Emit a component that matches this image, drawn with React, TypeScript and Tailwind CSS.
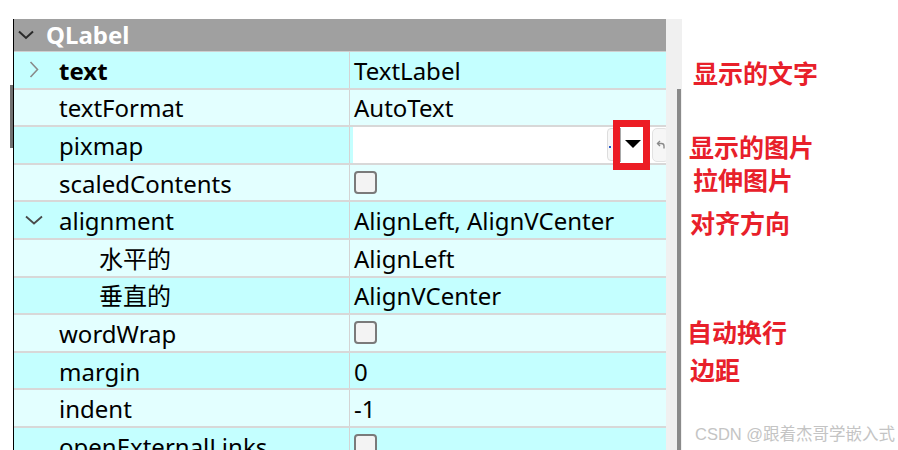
import React from 'react';

type Row = {
  name: string;
  value?: string;
  kind?: 'text' | 'check' | 'pixmap';
  bold?: boolean;
  child?: boolean;
  chevron?: 'right' | 'down';
};

const rows: Row[] = [
  { name: 'text', value: 'TextLabel', bold: true, chevron: 'right' },
  { name: 'textFormat', value: 'AutoText' },
  { name: 'pixmap', kind: 'pixmap' },
  { name: 'scaledContents', kind: 'check' },
  { name: 'alignment', value: 'AlignLeft, AlignVCenter', chevron: 'down' },
  { name: '水平的', value: 'AlignLeft', child: true },
  { name: '垂直的', value: 'AlignVCenter', child: true },
  { name: 'wordWrap', kind: 'check' },
  { name: 'margin', value: '0' },
  { name: 'indent', value: '-1' },
  { name: 'openExternalLinks', kind: 'check' },
];

const notes = [
  { text: '显示的文字', cls: 'mt-[60px] ml-[11px]' },
  { text: '显示的图片', cls: 'mt-[49px] ml-[7px]' },
  { text: '拉伸图片', cls: 'mt-[8px] ml-[11px]' },
  { text: '对齐方向', cls: 'mt-[18px] ml-[8px]' },
  { text: '自动换行', cls: 'mt-[84px] ml-[5px]' },
  { text: '边距', cls: 'mt-[13px] ml-[8px]' },
];

function Checkbox() {
  return <div className="w-[23px] h-[23px] rounded-[4px] border-2 border-[#7a7a7a] bg-[#f3f3f3]" />;
}

function PixmapEditor() {
  return (
    <div className="relative flex-1 h-full flex items-center bg-white ml-[3px] -mr-[3px]">
      <div className="flex-1" />
      <div className="relative w-[12px] h-[33px] border border-[#dddddd] rounded-l-[4px] bg-[#f7f7f7]">
        <div className="absolute left-[1px] bottom-[12px] w-[2px] h-[2px] bg-[#2456c8]" />
      </div>
      <div className="w-[25px] h-[34px] flex items-center justify-center border-l-2 border-[#a8a8a8] bg-white">
        <svg width="16" height="9" viewBox="0 0 16 9">
          <polygon points="0,0 16,0 8,8" fill="#000" />
        </svg>
      </div>
      <div className="w-[8px]" />
      <div className="w-[17px] h-[34px] flex items-center justify-center rounded-[5px] border border-[#e2e2e2] bg-[#f6f6f6]">
        <svg width="9" height="9" viewBox="0 0 9 9" fill="none" stroke="#8a8a8a" strokeWidth="1.4">
          <path d="M4 1 L1.5 3.5 L4 6" />
          <path d="M1.5 3.5 H5.5 Q8 3.5 8 6 V8.5" />
        </svg>
      </div>
      <div className="absolute left-[260px] -top-[7px] w-[37px] h-[50px] border-[7px] border-[#ec1c24]" />
    </div>
  );
}

export default function App() {
  return (
    <div
      className="w-[898px] h-[450px] bg-white flex overflow-hidden"
      style={{ fontFamily: '"Noto Sans", "Noto Sans CJK SC", sans-serif' }}
    >
      <div className="w-[13px] shrink-0">
        <div className="ml-[10px] mt-[85px] w-[3px] h-[63px] bg-[#707070]" />
      </div>

      <div className="mt-[19px] w-[653px] h-[431px] shrink-0 border-l border-black overflow-hidden">
        <div className="h-[33px] bg-[#a0a0a0] flex items-center pl-[4px] border-b border-[#cfcfcf]">
          <svg width="16" height="10" viewBox="0 0 16 10" fill="none" stroke="#2a2a2a" strokeWidth="2">
            <path d="M1 1.5 L8 8 L15 1.5" />
          </svg>
          <span className="ml-[12px] text-white font-bold text-[24px] leading-none">QLabel</span>
        </div>

        {rows.map((r, i) => (
          <div
            key={r.name}
            className={`h-[37.6px] flex border-b-2 border-[#d8d8d8] ${i % 2 === 0 ? 'bg-[#c4ffff]' : 'bg-[#e3ffff]'}`}
          >
            <div className="w-[336px] shrink-0 flex items-center border-r border-[#d4d4d4]">
              <div className={`${r.child ? 'w-[85px]' : 'w-[45px]'} shrink-0 flex items-center`}>
                {r.chevron === 'right' && (
                  <svg className="ml-[15px]" width="10" height="17" viewBox="0 0 10 17" fill="none" stroke="#8a8a8a" strokeWidth="1.6">
                    <path d="M1.5 1 L8.5 8.5 L1.5 16" />
                  </svg>
                )}
                {r.chevron === 'down' && (
                  <svg className="ml-[11px]" width="18" height="10" viewBox="0 0 18 10" fill="none" stroke="#4a4a4a" strokeWidth="1.8">
                    <path d="M1 1.5 L9 8.5 L17 1.5" />
                  </svg>
                )}
              </div>
              <span className={`pt-[2px] text-[24px] text-black whitespace-nowrap ${r.bold ? 'font-bold' : ''}`}>{r.name}</span>
            </div>
            <div className="flex-1 flex items-center">
              {r.kind === 'pixmap' ? (
                <PixmapEditor />
              ) : r.kind === 'check' ? (
                <div className="pl-[4px]">
                  <Checkbox />
                </div>
              ) : (
                <span className="pl-[4px] pt-[2px] text-[24px] text-black whitespace-nowrap">{r.value}</span>
              )}
            </div>
          </div>
        ))}
      </div>

      <div className="mt-[19px] w-[16px] h-[431px] shrink-0 bg-[#f0f0f0] flex justify-end">
        <div className="mt-[70px] mr-[1px] w-[4px] h-full bg-[#8a8a8a]" />
      </div>

      <div className="flex-1 flex flex-col">
        {notes.map((n) => (
          <div
            key={n.text}
            className={`${n.cls} h-[25px] text-[25px] leading-[25px] font-bold text-[#e8202a] whitespace-nowrap`}
            style={{ fontFamily: '"Noto Sans CJK SC", sans-serif' }}
          >
            {n.text}
          </div>
        ))}
        <div
          className="mt-auto mb-[6px] ml-[13px] text-[16.5px] leading-[20px] text-[#c4c4c4] whitespace-nowrap"
          style={{ fontFamily: '"Liberation Sans", "Noto Sans CJK SC", sans-serif' }}
        >
          CSDN @跟着杰哥学嵌入式
        </div>
      </div>
    </div>
  );
}
